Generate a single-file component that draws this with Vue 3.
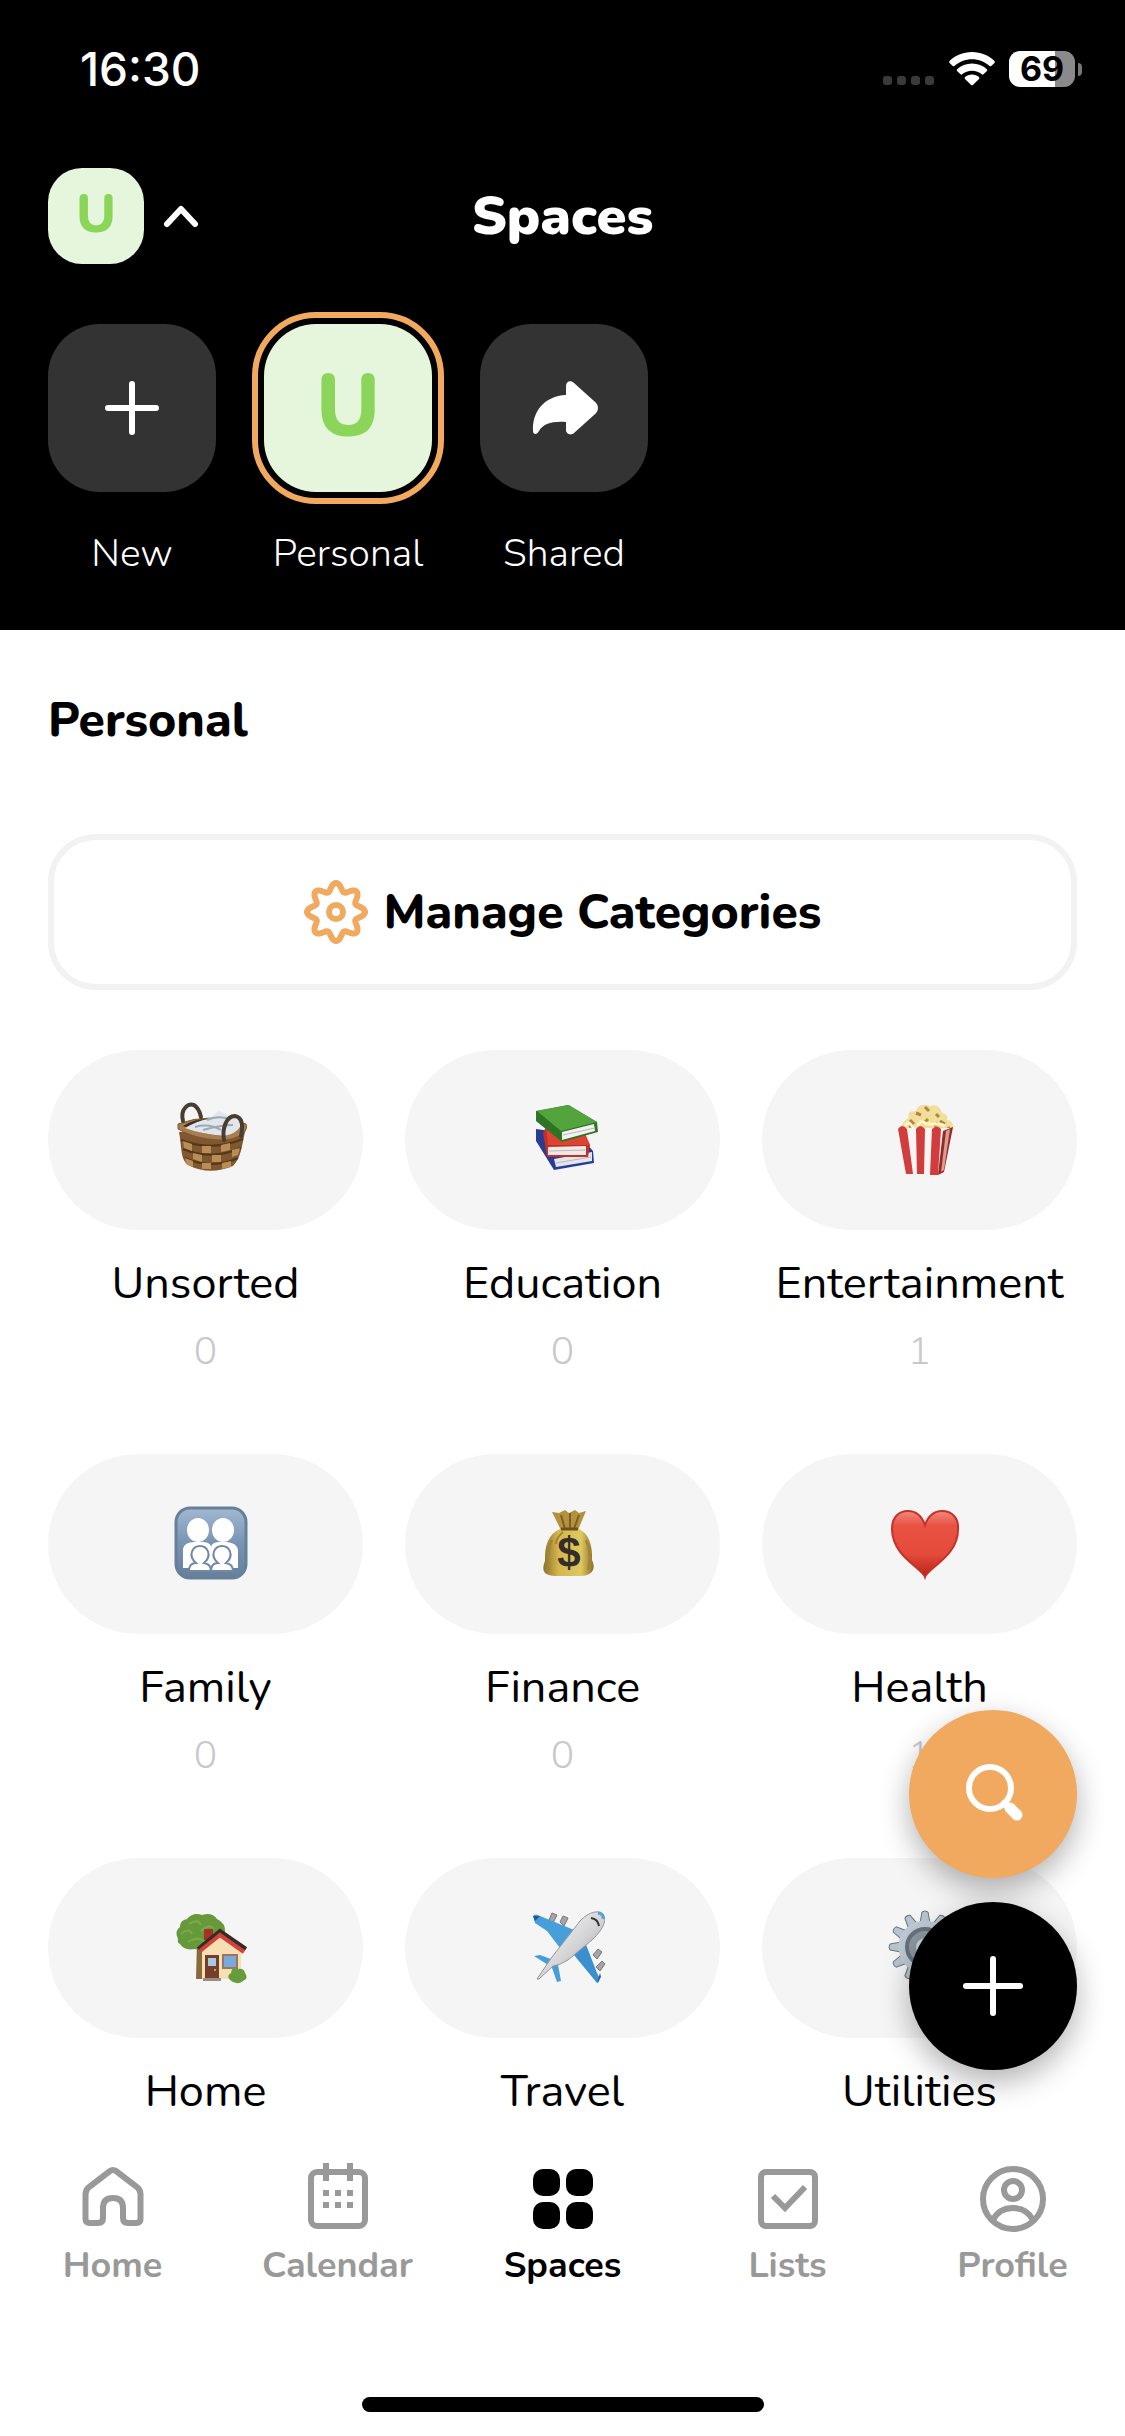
<script setup>
const spaces = [
  { name: 'New', kind: 'new' },
  { name: 'Personal', kind: 'personal', selected: true },
  { name: 'Shared', kind: 'shared' },
]

const categories = [
  { name: 'Unsorted', count: 0, icon: 'basket' },
  { name: 'Education', count: 0, icon: 'books' },
  { name: 'Entertainment', count: 1, icon: 'popcorn' },
  { name: 'Family', count: 0, icon: 'family' },
  { name: 'Finance', count: 0, icon: 'money' },
  { name: 'Health', count: 1, icon: 'heart' },
  { name: 'Home', icon: 'house' },
  { name: 'Travel', icon: 'plane' },
  { name: 'Utilities', icon: 'cog' },
]

const tabs = [
  { name: 'Home', icon: 'home' },
  { name: 'Calendar', icon: 'calendar' },
  { name: 'Spaces', icon: 'spaces', active: true },
  { name: 'Lists', icon: 'lists' },
  { name: 'Profile', icon: 'profile' },
]

const cogTeeth = Array.from({ length: 12 }, (_, i) => i * 30)

// Eight-lobed outline of the settings gear, centred in a 64-unit box.
const gearOutline = Array.from({ length: 144 }, (_, i) => {
  const angle = (i / 144) * Math.PI * 2
  const radius = 25 + 4 * Math.cos(angle * 8)
  const x = 32 + radius * Math.cos(angle)
  const y = 32 + radius * Math.sin(angle)
  return `${x.toFixed(2)},${y.toFixed(2)}`
}).join(' ')
</script>

<template>
  <div class="app">
    <header class="top">
      <div class="status">
        <span class="time">16:30</span>
        <div class="indicators">
          <svg class="dots" width="52" height="34" viewBox="0 0 52 34" fill="#3a3a3a">
            <rect x="0" y="24" width="9" height="9" rx="3" />
            <rect x="14" y="24" width="9" height="9" rx="3" />
            <rect x="28" y="24" width="9" height="9" rx="3" />
            <rect x="42" y="24" width="9" height="9" rx="3" />
          </svg>
          <svg width="46" height="34" viewBox="0 0 46 34" fill="#fff">
            <path d="M23 0C32 0 40 3.600 45.500 9Q46.300 10 45.500 10.900L42.200 14Q41.500 14.600 40.600 14C35.800 9.600 29.700 7.200 23 7.200S10.200 9.600 5.400 14Q4.500 14.600 3.800 14L.5 10.900Q-.3 10 .5 9C6 3.600 14 0 23 0Z" />
            <path d="M23 11.500C28.800 11.500 34 13.600 37.900 17.200Q38.700 18.100 37.900 19L34.500 22.300Q33.700 23 32.800 22.300C30.100 20 26.800 18.700 23 18.700S15.900 20 13.200 22.300Q12.300 23 11.500 22.300L8.100 19Q7.300 18.100 8.100 17.200C12 13.600 17.200 11.500 23 11.500Z" />
            <path d="M23 22.600C25.700 22.600 28.200 23.500 30 25.100Q30.800 26 30 26.900L24.100 32.800Q23 33.800 21.900 32.800L16 26.900Q15.200 26 16 25.100C17.800 23.500 20.300 22.600 23 22.600Z" />
          </svg>
          <div class="battery">
            <span class="cell">69</span>
            <span class="nub"></span>
          </div>
        </div>
      </div>

      <div class="title-row">
        <button class="account" type="button" aria-label="Switch account">
          <span class="avatar">U</span>
          <svg width="34" height="22" viewBox="0 0 34 22" fill="none" stroke="#fff" stroke-width="6" stroke-linecap="round" stroke-linejoin="round"><path d="M3 19 17 4 31 19" /></svg>
        </button>
        <h1>Spaces</h1>
      </div>

      <div class="spaces">
        <button v-for="s in spaces" :key="s.name" class="space" type="button">
          <span class="tile" :class="{ selected: s.selected }">
            <svg v-if="s.kind === 'new'" width="54" height="54" viewBox="0 0 54 54" stroke="#fff" stroke-width="6" stroke-linecap="round"><path d="M27 3V51M3 27H51" /></svg>
            <span v-else-if="s.kind === 'personal'" class="letter">U</span>
            <svg v-else width="64" height="54" viewBox="0 0 64 54" fill="#fff"><path d="M34 14V5C34 0 39-1 42 2L62 20Q66 23 66 27T62 34L42 52C39 55 34 53 34 49V41C20 40 11 43 7 50C5 54 1 54 1 50C0 31 12 15 34 14Z" /></svg>
          </span>
          <span class="space-name">{{ s.name }}</span>
        </button>
      </div>
    </header>

    <main class="content">
      <h2>Personal</h2>
      <button class="manage" type="button">
        <svg width="64" height="64" viewBox="0 0 64 64" fill="none" stroke="#f1a85f" stroke-width="6" stroke-linejoin="round">
          <polygon :points="gearOutline" />
          <circle cx="32" cy="32" r="7" />
        </svg>
        <span>Manage Categories</span>
      </button>

      <div class="grid">
        <a v-for="c in categories" :key="c.name" class="category" href="#">
          <span class="pill">
            <svg v-if="c.icon === 'basket'" class="emoji" viewBox="0 0 72 72">
              <path d="M4 29C7 44 5 56 13 62Q34 73 58 63C66 55 67 42 70 29Z" fill="#80582f" />
              <path d="M6 37Q36 49 68 36M8 46Q36 58 66 45M10 55Q36 67 63 55" stroke="#543719" stroke-width="2" fill="none" />
              <path d="M8 38l9 3v7l-8-3zM27 43h9v7h-9zM46 42l9-2v7l-9 2zM18 50l9 2v7l-9-3zM37 52h9v7h-9zM57 47l8-2-2 7-6 2zM10 55l8 3v6l-7-3zM27 60h9v6h-9zM47 60l9-2v6l-9 2z" fill="#b98d55" />
              <path d="M3 21Q34 9 71 21Q73 25 69 30Q58 38 44 37Q20 36 3 26Z" fill="#a97d4d" stroke="#7d5632" />
              <path d="M8 23Q20 15 35 16L65 22Q64 30 49 33Q24 31 8 23Z" fill="#3e3025" />
              <path d="M10 25Q22 18 33 16L44 8 56 14Q67 18 65 24Q61 31 49 33 26 31 10 25Z" fill="#e1e6eb" />
              <path d="M32 17Q42 12 55 16M20 24Q34 20 46 27M28 27Q46 22 58 22" fill="none" stroke="#9ba9b5" stroke-width="2" />
              <path d="M8 18C5 6 13 0 19 2Q24 5 26 14M49 37C47 26 51 13 60 13Q70 15 66 33" fill="none" stroke="#493c32" stroke-width="4" stroke-linecap="round" />
            </svg>
            <svg v-else-if="c.icon === 'books'" class="emoji" viewBox="0 0 72 72">
              <path d="M4 26 47 32 61 48 62 60 22 67 4 38Z" fill="#293c94" />
              <path d="M22 56 60 49V58L24 64Z" fill="#e4e6ee" />
              <path d="M14 24 51 26 58 42 56 54 15 54 11 30Z" fill="#c22f24" />
              <path d="M14 24 49 25 58 42H16Z" fill="#dd4332" />
              <path d="M16 44 54 43V52H16Z" fill="#f1e9e6" />
              <path d="M4 8 36 2 65 19 66 29 30 39 4 18Z" fill="#2e7326" />
              <path d="M5 8 37 2 65 19 29 28Z" fill="#54a43e" />
              <path d="M30 29 62 21 63 28 30 37Z" fill="#f2f1ef" />
              <path d="M31 32 63 25M24 60 59 54M17 48 54 47" stroke="#b9b9bd" />
            </svg>
            <svg v-else-if="c.icon === 'popcorn'" class="emoji" viewBox="0 0 72 72">
              <path d="M12 25Q14 17 20 15Q17 8 27 8Q30-1 41 3Q50 0 53 10Q60 11 58 17Q66 18 64 28L60 34H14Z" fill="#efdf9b" />
              <path d="M21 17l4 4M27 10l5 2M36 4l4 4M47 11l3 3M35 20l4-4M51 18l5 3M20 24l4-2M45 23l4-3M59 24l2 3" stroke="#b98142" stroke-width="3" />
              <path d="M16 23q3-6 7 0t6 0 5-4 7 2 8 0 7 2" stroke="#fff6c6" stroke-width="3" fill="none" />
              <path d="M9 25H64L55 71H17Z" fill="#faf5f2" />
              <path d="M9 26Q13 20 18 26L24 71H17ZM27 26Q31 20 36 26L35 71H28ZM43 26Q48 21 52 26L49 72H41Z" fill="#d13c3d" />
              <path d="M54 28 64 24 55 69 49 72Z" fill="#9d2528" />
              <path d="M57 28 61 26 55 67 52 69Z" fill="#d3a18e" />
            </svg>
            <svg v-else-if="c.icon === 'family'" class="emoji" viewBox="0 0 72 72">
              <defs><linearGradient id="familyBlue" x2="0" y2="1"><stop stop-color="#a3b8d0" /><stop offset=".5" stop-color="#7894b3" /><stop offset="1" stop-color="#657f9c" /></linearGradient></defs>
              <rect x="1" y="1" width="70" height="70" rx="14" fill="url(#familyBlue)" stroke="#67809a" stroke-width="3" />
              <g fill="#fff">
                <ellipse cx="23" cy="23" rx="11" ry="12" /><ellipse cx="48" cy="23" rx="11" ry="12" />
                <path d="M8 61V42Q9 35 20 35H29Q36 36 36 40Q37 35 45 35H52Q62 36 63 43V61Z" />
              </g>
              <g fill="#fff" stroke="#7189a5" stroke-width="2">
                <path d="M14 64Q14 56 21 56C12 48 18 39 25 39S38 48 29 56Q36 57 36 64ZM36 64Q36 56 43 56C34 48 40 39 47 39S60 48 51 56Q58 57 58 64Z" />
              </g>
            </svg>
            <svg v-else-if="c.icon === 'money'" class="emoji" viewBox="0 0 72 72">
              <defs><linearGradient id="sackGold"><stop stop-color="#8f7129" /><stop offset=".3" stop-color="#d5b650" /><stop offset=".75" stop-color="#dfc85f" /><stop offset="1" stop-color="#8c6e28" /></linearGradient></defs>
              <path d="M20 5 27 6 33 3 37 6 43 3 47 6 54 4 46 23H29Z" fill="#b4923d" />
              <path d="M29 8 33 22M38 6V22M47 8 42 22" stroke="#7d5f26" stroke-width="2" />
              <path d="M28 22H47Q61 29 60 53C65 64 58 69 48 69H25C12 69 9 64 13 54Q12 29 28 22Z" fill="url(#sackGold)" />
              <path d="M29 22H46" stroke="#70511e" stroke-width="3" />
              <path d="M20 33Q14 46 17 63M54 33Q60 47 56 63M31 25Q24 31 24 37" fill="none" stroke="#a18434" stroke-width="2" />
              <text x="37" y="60" text-anchor="middle" class="dollar">$</text>
            </svg>
            <svg v-else-if="c.icon === 'heart'" class="emoji" viewBox="0 0 72 72">
              <defs><linearGradient id="heartRed" x2="0" y2="1"><stop stop-color="#ef8a7e" /><stop offset=".22" stop-color="#e95143" /><stop offset=".65" stop-color="#e44b3a" /><stop offset="1" stop-color="#b92219" /></linearGradient></defs>
              <path d="M36 70C33 61 3 49 3 22C3 10 10 4 19 4Q31 4 36 18Q41 4 53 4C63 4 70 11 69 23C69 49 39 61 36 70Z" fill="url(#heartRed)" stroke="#c43228" stroke-width="2" />
            </svg>
            <svg v-else-if="c.icon === 'house'" class="emoji" viewBox="0 0 72 72">
              <path d="M22 30H32L30 68H21Z" fill="#8a6a3b" />
              <path d="M3 28Q-1 20 5 16Q5 9 12 8Q18 1 27 4Q37 1 42 8Q51 12 50 22Q51 33 39 34Q31 42 20 38Q9 40 5 33Q2 32 3 28Z" fill="#65993a" />
              <path d="M6 23Q14 16 17 23M14 13Q23 7 26 14M26 20Q35 12 39 18M13 31Q25 24 30 32" fill="none" stroke="#7aab4a" stroke-width="2" />
              <path d="M27 36 45 20 66 38V68H27Z" fill="#f5dfb3" />
              <path d="M29 18H38V29H29Z" fill="#a93027" />
              <path d="M23 38 45 20 71 38" stroke="#352b29" stroke-width="4" fill="none" />
              <path d="M25 40 45 24 69 41" stroke="#d34138" stroke-width="4" fill="none" />
              <path d="M30 44H44V68H30Z" fill="#743e2c" /><path d="M33 47H41V55H33Z" fill="#a6cae6" />
              <path d="M48 44H62V57H48Z" fill="#7aaadd" stroke="#9a765c" stroke-width="2" />
              <path d="M28 67H46V70H28Z" fill="#988f83" />
              <path d="M55 69Q51 65 56 62Q57 55 63 58Q69 57 70 62Q74 67 68 70Q62 75 55 69Z" fill="#679c3c" />
              <circle cx="40" cy="59" r="1" fill="#e7bd5c" />
            </svg>
            <svg v-else-if="c.icon === 'plane'" class="emoji" viewBox="0 0 72 72">
              <defs><linearGradient id="planeBody" x2="1" y2="1"><stop stop-color="#fff" /><stop offset=".55" stop-color="#d3d3d5" /><stop offset="1" stop-color="#85868c" /></linearGradient></defs>
              <g fill="#a5a5a9" stroke="#777"><path d="M17 9 20 2 25 4 21 12ZM28 11 31 5 36 7 32 15ZM61 44 66 38 70 41 65 48ZM64 56 70 50 73 53 68 60Z" /></g>
              <path d="M1 5Q3 2 8 5L47 21 28 37 15 20 3 12Z" fill="#469fdb" />
              <path d="M53 31 65 62Q70 70 65 72L42 44Z" fill="#3a8fce" />
              <path d="M2 45 8 44 27 51 21 57ZM19 54 25 48 29 70 25 71Z" fill="#469dd8" />
              <path d="M1 5 8 5 3 10ZM65 72 69 66 68 62Z" fill="#1f5b94" />
              <path d="M5 68 20 46 48 10C57 0 68-1 71 3S74 16 60 29L36 49Q28 54 21 55L7 68Z" fill="url(#planeBody)" stroke="#96969a" />
              <path d="M59 7Q66 8 67 15" fill="none" stroke="#333" stroke-width="2" />
              <path d="M66 2Q72 3 71 8" fill="none" stroke="#4ea4dc" stroke-width="3" />
            </svg>
            <svg v-else class="emoji" viewBox="0 0 72 72">
              <g fill="#b8c4ce" stroke="#68737d"><path v-for="a in cogTeeth" :key="a" d="M31 12 33 1Q36-1 39 1L41 12Z" :transform="`rotate(${a} 36 36)`" /></g>
              <circle cx="36" cy="36" r="22" fill="#8d98a2" stroke="#bdc9d3" stroke-width="9" />
              <circle cx="36" cy="36" r="18" fill="none" stroke="#68727c" stroke-width="4" />
              <circle cx="36" cy="36" r="9" fill="#cbd5de" />
            </svg>
          </span>
          <span class="category-name">{{ c.name }}</span>
          <span v-if="c.count !== undefined" class="count">{{ c.count }}</span>
        </a>
      </div>

      <div class="fabs">
        <button class="fab search" type="button" aria-label="Search">
          <svg width="60" height="60" viewBox="0 0 60 60" fill="none" stroke="#fff" stroke-linecap="round"><circle cx="27" cy="24" r="21" stroke-width="6" /><path d="M41 39 44 42" stroke-width="6" /><path d="M47 44 54 51" stroke-width="11" /></svg>
        </button>
        <button class="fab add" type="button" aria-label="Add">
          <svg width="60" height="60" viewBox="0 0 60 60" stroke="#fff" stroke-width="6" stroke-linecap="round"><path d="M30 3V57M3 30H57" /></svg>
        </button>
      </div>
    </main>

    <nav class="bottom">
      <div class="tabs">
        <a v-for="t in tabs" :key="t.name" class="tab" :class="{ active: t.active }" href="#">
          <svg width="72" height="72" viewBox="0 0 72 72" fill="none" stroke="currentColor" stroke-width="6">
            <path v-if="t.icon === 'home'" d="M36 8Q37.500 8 39 9L60 25Q63.500 28 63.500 32V57Q63.500 61 59 61H51Q46 61 46 56V46Q46 36 36 36T26 46V56Q26 61 21 61H13Q8.500 61 8.500 57V32Q8.500 28 12 25L33 9Q34.500 8 36 8Z" />
            <template v-else-if="t.icon === 'calendar'">
              <rect x="9" y="10" width="54" height="54" rx="6" />
              <path d="M24 1V19M48 1V19" />
              <path d="M21 31H27M33 31H39M45 31H51M21 43H27M33 43H39M45 43H51" />
            </template>
            <g v-else-if="t.icon === 'spaces'" fill="currentColor" stroke="none">
              <rect x="6" y="7" width="27" height="27" rx="10" /><rect x="39" y="7" width="27" height="27" rx="10" />
              <rect x="6" y="40" width="27" height="27" rx="10" /><rect x="39" y="40" width="27" height="27" rx="10" />
            </g>
            <template v-else-if="t.icon === 'lists'">
              <rect x="9" y="10" width="54" height="54" rx="5" />
              <path d="M21 34 33 46 53 25" />
            </template>
            <template v-else>
              <circle cx="36" cy="37" r="30" /><circle cx="36" cy="28" r="9" />
              <path d="M16 58Q22 46 36 46T56 58" />
            </template>
          </svg>
          <span>{{ t.name }}</span>
        </a>
      </div>
      <div class="home-indicator"></div>
    </nav>
  </div>
</template>

<style>
body {
  margin: 0;
  background: #fff;
}
</style>

<style scoped>
* {
  box-sizing: border-box;
}
.app {
  display: flex;
  flex-direction: column;
  height: 100vh;
  overflow: hidden;
  background: #fff;
  color: #000;
  font-family: Nunito, Lato, sans-serif;
}
button {
  margin: 0;
  padding: 0;
  border: 0;
  background: none;
  color: inherit;
  font: inherit;
  cursor: pointer;
}
a {
  color: inherit;
  text-decoration: none;
}
svg {
  display: block;
  flex: none;
  overflow: visible;
}
.top {
  flex: none;
  padding: 0 48px 52px;
  background: #000;
  color: #fff;
}
.status {
  display: flex;
  align-items: center;
  justify-content: space-between;
  height: 138px;
  padding-left: 32px;
  font-family: Inter, sans-serif;
}
.time {
  font-size: 46px;
  font-weight: 500;
}
.indicators {
  display: flex;
  align-items: center;
  gap: 14px;
}
.battery {
  display: flex;
  align-items: center;
  gap: 3px;
  margin-right: -5px;
}
.cell {
  width: 66px;
  height: 36px;
  border-radius: 11px;
  background: linear-gradient(90deg, #fff 70%, #8a8a8a 70%);
  color: #000;
  font-size: 34px;
  font-weight: 700;
  line-height: 36px;
  text-align: center;
}
.nub {
  width: 4px;
  height: 13px;
  border-radius: 0 4px 4px 0;
  background: #777;
}
.title-row {
  display: grid;
  grid-template-columns: 1fr auto 1fr;
  align-items: center;
  padding-top: 30px;
}
.account {
  display: flex;
  align-items: center;
  justify-self: start;
  gap: 20px;
}
.avatar {
  width: 96px;
  height: 96px;
  border-radius: 34px;
  background: #e5f6dc;
  color: #8bd65a;
  font-size: 54px;
  font-weight: 800;
  line-height: 92px;
  text-align: center;
}
h1,
h2 {
  margin: 0;
}
h1 {
  font-size: 54px;
  font-weight: 900;
  line-height: 60px;
}
.spaces {
  display: flex;
  gap: 48px;
  padding-top: 60px;
}
.space {
  display: flex;
  flex-direction: column;
  align-items: center;
  gap: 38px;
}
.tile {
  display: grid;
  place-items: center;
  width: 168px;
  height: 168px;
  border-radius: 52px;
  background: #333;
}
.tile.selected {
  background: #e5f6dc;
  outline: 6px solid #f1a85f;
  outline-offset: 6px;
}
.letter {
  color: #8bd65a;
  font-size: 87px;
  font-weight: 800;
  line-height: 162px;
}
.space-name {
  font-size: 39px;
  font-weight: 300;
  line-height: 48px;
}
.content {
  position: relative;
  flex: 1;
  min-height: 0;
  padding: 60px 48px 0;
  overflow: hidden;
}
h2 {
  font-size: 48px;
  font-weight: 800;
  line-height: 60px;
}
.manage {
  display: flex;
  align-items: center;
  justify-content: center;
  gap: 16px;
  width: 100%;
  height: 156px;
  margin-top: 84px;
  border: 6px solid #f2f2f2;
  border-radius: 48px;
  font-size: 48px;
  font-weight: 800;
}
.grid {
  display: grid;
  grid-template-columns: repeat(3, 1fr);
  gap: 74px 42px;
  padding-top: 60px;
}
.category {
  display: flex;
  flex-direction: column;
  align-items: center;
}
.pill {
  display: grid;
  place-items: center;
  width: 100%;
  height: 180px;
  padding: 0 0 2px 11px;
  border-radius: 90px;
  background: #f5f5f5;
}
.emoji {
  width: 72px;
  height: 72px;
}
.dollar {
  fill: #332e28;
  font: 700 42px "Liberation Sans", sans-serif;
}
.category-name {
  margin-top: 24px;
  font-size: 45px;
  line-height: 60px;
}
.count {
  margin-top: 14px;
  margin-bottom: 4px;
  color: #c8c8c8;
  font-size: 39px;
  font-weight: 300;
  line-height: 48px;
}
.fabs {
  position: absolute;
  right: 48px;
  bottom: 54px;
  display: grid;
  gap: 24px;
}
.fab {
  display: grid;
  place-items: center;
  width: 168px;
  height: 168px;
  border-radius: 50%;
  box-shadow: 0 12px 30px rgba(0, 0, 0, 0.3);
}
.search {
  background: #f1a85f;
}
.add {
  background: #000;
}
.bottom {
  flex: none;
  padding: 38px 0 24px;
  background: #fff;
}
.tabs {
  display: grid;
  grid-template-columns: repeat(5, 1fr);
}
.tab {
  display: flex;
  flex-direction: column;
  align-items: center;
  gap: 8px;
  color: #999;
  font-size: 36px;
  font-weight: 700;
  line-height: 48px;
}
.tab.active {
  color: #000;
}
.home-indicator {
  width: 402px;
  height: 15px;
  margin: 107px auto 0;
  border-radius: 8px;
  background: #000;
}
</style>
